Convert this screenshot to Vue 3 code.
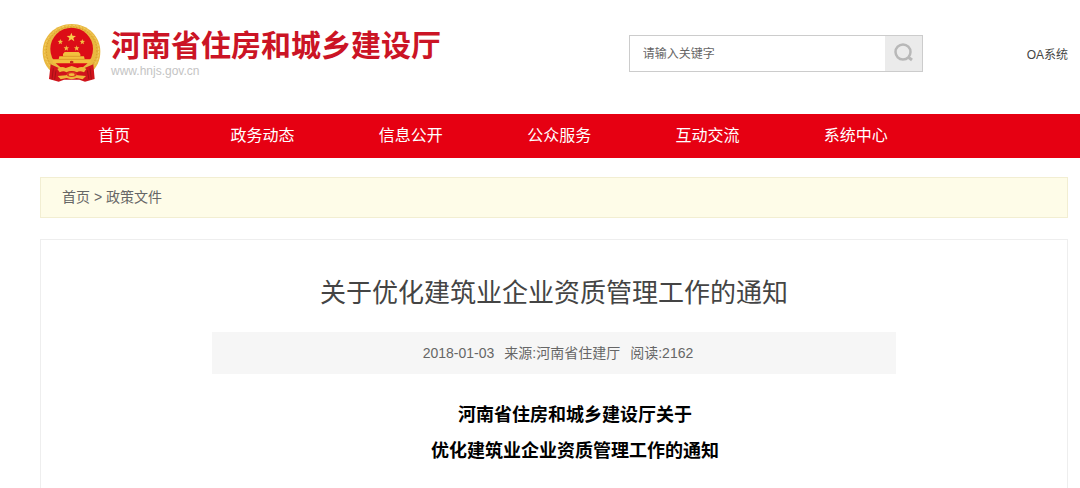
<script setup>
import { ref } from 'vue'

const keyword = ref('')

const navItems = ['首页', '政务动态', '信息公开', '公众服务', '互动交流', '系统中心']

const article = {
  title: '关于优化建筑业企业资质管理工作的通知',
  date: '2018-01-03',
  source: '河南省住建厅',
  reads: 2162,
  heading: ['河南省住房和城乡建设厅关于', '优化建筑业企业资质管理工作的通知']
}
</script>

<template>
  <div class="page">
    <header class="header wrap">
      <a href="#" class="brand">
        <svg class="emblem" viewBox="36 36 180 180" aria-hidden="true">
          <!-- wheat ring -->
          <path d="M70 186C46 170 38 145 38 122C38 76 76 39 125 39S211 76 211 122C211 146 202 170 180 186Z" fill="#e9b840" />
          <ellipse cx="125" cy="120" rx="76" ry="72" fill="none" stroke="#d39a2a" stroke-width="3" stroke-dasharray="4 5" />
          <ellipse cx="125" cy="120" rx="81" ry="77" fill="none" stroke="#f6d36a" stroke-width="3" stroke-dasharray="6 5" />
          <!-- ribbons -->
          <path d="M62 160L88 172L125 166L162 172L190 160L194 204L165 212L148 206H102L86 212L57 204Z" fill="#d0141c" />
          <path d="M70 172L66 205M78 178L74 206M180 172L184 205M172 178L177 206" stroke="#8f0d14" stroke-width="2" />
          <circle cx="125" cy="114" r="64" fill="#dc0d17" />
          <!-- stars -->
          <path d="M124 65L127.500 74.500L138 75L130 81L133 91L124 85L115 91L118 81L110 75L120.500 74.500Z" fill="#f8cf4c" />
          <path
            v-for="(s, i) in [[91, 92], [157, 92], [109, 111], [140, 111]]"
            :key="i"
            :transform="`translate(${s[0]} ${s[1]})`"
            d="M0-8L2-2.500L8-2L3.500 2L5 8L0 4.500L-5 8L-3.500 2L-8-2L-2-2.500Z"
            fill="#f3bd43"
          />
          <!-- gate -->
          <path d="M99 129L104 123H146L151 129V136H162L164 145H183L181 157H69L67 145H86L88 136H99Z" fill="#f2bf3e" />
          <path d="M98 136H152M86 145H164" stroke="#d38a20" stroke-width="2" />
          <path d="M120 157V151Q125 147 130 151V157Z" fill="#c4261a" />
          <!-- gear and knot -->
          <path d="M82 174Q94 164 107 171L125 165L143 171Q157 164 169 174L162 184Q149 178 141 184Q125 176 109 184Q101 178 89 184Z" fill="#efb83c" />
          <path d="M108 193Q125 182 143 193L168 195L158 205L140 201Q125 208 110 201L92 205L83 195Z" fill="#efb83c" />
          <ellipse cx="125" cy="190" rx="15" ry="8" fill="#dd3a20" />
          <ellipse cx="125" cy="191" rx="9" ry="4" fill="#f2bf3e" />
        </svg>
        <span class="brand-text">
          <span class="brand-name">河南省住房和城乡建设厅</span>
          <span class="brand-url">www.hnjs.gov.cn</span>
        </span>
      </a>

      <form class="search" role="search" @submit.prevent>
        <input v-model="keyword" type="text" placeholder="请输入关键字" aria-label="请输入关键字" />
        <button type="submit" aria-label="搜索">
          <svg viewBox="0 0 22 22" width="22" height="22" fill="none" stroke="#b8b8b8" stroke-width="2.500">
            <circle cx="11" cy="10" r="7.500" />
            <path d="M16 15L20 18" stroke-width="3" />
          </svg>
        </button>
      </form>

      <a href="#" class="oa">OA系统</a>
    </header>

    <nav class="nav">
      <div class="nav-inner wrap">
        <a v-for="item in navItems" :key="item" href="#">{{ item }}</a>
      </div>
    </nav>

    <main class="wrap">
      <div class="crumbs">
        <a href="#">首页</a> &gt; <a href="#">政策文件</a>
      </div>

      <article class="card">
        <h1>{{ article.title }}</h1>
        <div class="meta">
          <span>{{ article.date }}</span>
          <span>来源:{{ article.source }}</span>
          <span>阅读:{{ article.reads }}</span>
        </div>
        <h2>
          <span v-for="line in article.heading" :key="line">{{ line }}</span>
        </h2>
      </article>
    </main>
  </div>
</template>

<style>
body { background: #fff; }
</style>

<style scoped>
.page { font-family: "Liberation Sans", "Noto Sans CJK SC", sans-serif; font-size: 14px; color: #666; min-height: 100vh; overflow: hidden; }
a { color: inherit; text-decoration: none; }
.wrap { margin: 0 12px 0 40px; }

.header { display: flex; align-items: center; height: 114px; }
.brand { display: flex; align-items: center; gap: 9px; padding: 0 0 8px 2px; }
.emblem { width: 60px; height: 60px; }
.brand-text { display: flex; flex-direction: column; }
.brand-name { font-size: 30px; line-height: 36px; font-weight: 700; color: #cb1425; white-space: nowrap; }
.brand-url { font-size: 12px; line-height: 14px; color: #c4c4c4; }

.search { display: flex; box-sizing: border-box; width: 294px; height: 37px; margin: 0 104px 8px auto; border: 1px solid #ccc; }
.search input { flex: 1; min-width: 0; padding: 2px 13px 0; border: 0; outline: none; background: #fff; font: inherit; font-size: 12px; color: #555; }
.search input::placeholder { color: #666; opacity: 1; }
.search button { display: flex; align-items: center; justify-content: center; width: 37px; padding: 0; border: 0; background: #ebebeb; cursor: pointer; }
.oa { padding-bottom: 8px; font-size: 12px; color: #444; }

.nav { background: #e60012; }
.nav-inner { display: flex; }
.nav a { width: 14.43%; line-height: 44px; text-align: center; font-size: 16px; color: #fff; }

.crumbs { margin: 19px 0 21px; padding: 0 21px; line-height: 39px; border: 1px solid #f2eed2; background: #fefce8; }

.card { padding: 32px 0; border: 1px solid #eee; text-align: center; }
.card h1 { margin: 0 0 18px; font-size: 26px; line-height: 42px; font-weight: 400; color: #444; }
.meta { display: flex; justify-content: center; gap: 10px; box-sizing: border-box; width: 66.7%; margin: 0 auto 23px; padding-left: 8px; line-height: 42px; background: #f6f6f6; }
.card h2 { margin: 0; padding-left: 42px; font-size: 18px; line-height: 36px; font-weight: 700; color: #000; }
.card h2 span { display: block; }
</style>
